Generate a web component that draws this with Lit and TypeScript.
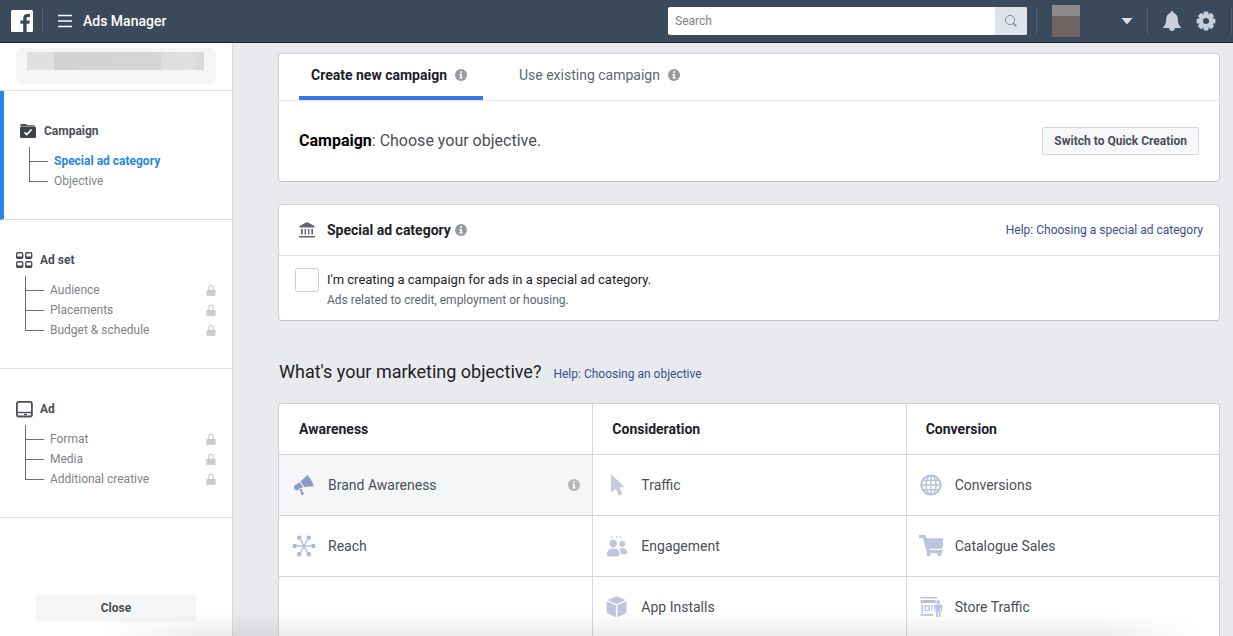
import { LitElement, html, svg, css, nothing, type TemplateResult } from "lit";
import { customElement, property } from "lit/decorators.js";
import { classMap } from "lit/directives/class-map.js";

interface Icon {
  width: number;
  height: number;
  body: TemplateResult;
}

const ICONS: Record<string, Icon> = {
  logo: {
    width: 22,
    height: 22,
    body: svg`<rect width="22" height="22" rx="1.5" fill="#fff"/>
      <path fill="#3a4a5b" d="M12.2 22v-8.2H9.4v-3.2h2.8V8.300C12.200 5.400 13.900 4 16.500 4c1.200 0 2.200.1 2.500.1v2.900h-1.700c-1.400 0-1.700.7-1.700 1.600v2h3.200l-.4 3.200h-2.800V22z"/>`,
  },
  menu: {
    width: 14,
    height: 14,
    body: svg`<path d="M0 1.500h14M0 7h14M0 12.500h14" stroke="#fff" stroke-width="1.500"/>`,
  },
  search: {
    width: 14,
    height: 14,
    body: svg`<circle cx="6" cy="6" r="4.600" fill="none" stroke="#858b93" stroke-width="1"/><path d="M9.300 9.300l3 3" stroke="#858b93" stroke-width="1.800"/>`,
  },
  caret: {
    width: 12,
    height: 8,
    body: svg`<path d="M.5 1h11L6 7.500z" fill="#dcdfe6"/>`,
  },
  bell: {
    width: 18,
    height: 20,
    body: svg`<g fill="#c9cfda"><path d="M9 0c.9 0 1.500.6 1.500 1.400v.5c2.800.7 4.300 3 4.300 6.100 0 4 1 6 3 8.200v.8H.2v-.8c2-2.200 3-4.200 3-8.200 0-3.100 1.500-5.400 4.300-6.100v-.5C7.500.6 8.100 0 9 0z"/><path d="M6 17h6c-.3 1.900-1.400 2.900-3 2.900S6.300 18.900 6 17z"/></g>`,
  },
  gear: {
    width: 20,
    height: 20,
    body: svg`<g fill="#c9cfda">${[0, 45, 90, 135].map(
      (a) => svg`<rect x="7.500" y="0.600" width="5" height="18.800" rx="1" transform="rotate(${a} 10 10)"/>`,
    )}<circle cx="10" cy="10" r="7.200"/></g><circle cx="10" cy="10" r="3" fill="#3a4a5b"/>`,
  },
  info: {
    width: 12,
    height: 12,
    body: svg`<circle cx="6" cy="6" r="6" fill="currentColor"/><circle cx="6" cy="3.100" r="1.100" fill="#fff"/><path d="M4.400 5h2.500v3.500h.9v1H4.300v-1h.9V6h-.8z" fill="#fff"/>`,
  },
  lock: {
    width: 10,
    height: 12,
    body: svg`<path d="M2.900 6.500V3.300a2.100 2.100 0 0 1 4.200 0v3.200" fill="none" stroke="#bfc0c3" stroke-width="1"/><path d="M.5 6h9v5.800h-9z" fill="#c6c7ca"/><path d="M.5 8h9M.5 10h9" stroke="#d8d9db" stroke-width=".7"/>`,
  },
  campaign: {
    width: 16,
    height: 14,
    body: svg`<path d="M1.500 0h4.300l1.400 1.300h6.600a1 1 0 0 1 1 1H1.200L.5 3V1c0-.6.4-1 1-1z" fill="#4b4f56"/><rect y="2.400" width="16" height="11.600" rx="1.500" fill="#3f4349"/><path d="M4.500 8.300l2.300 2.200 4.700-5" fill="none" stroke="#fff" stroke-width="1.700"/>`,
  },
  adset: {
    width: 17,
    height: 17,
    body: svg`${[[0.7, 0.7], [9.7, 0.7], [0.7, 9.7], [9.7, 9.7]].map(
      ([x, y]) =>
        svg`<rect x="${x}" y="${y}" width="6" height="5.600" rx="1.200" fill="none" stroke="#4b4f56" stroke-width="1.400"/><path d="M${x} ${y + 4.8}h6" stroke="#3f4349" stroke-width="2"/>`,
    )}`,
  },
  ad: {
    width: 17,
    height: 17,
    body: svg`<rect x=".9" y=".9" width="15" height="14.600" rx="2" fill="none" stroke="#4b4f56" stroke-width="1.800"/><path d="M1 11.500h15" stroke="#4b4f56" stroke-width="1.400"/><path d="M8 13.500h3" stroke="#4b4f56" stroke-width="1.400"/>`,
  },
  bank: {
    width: 16,
    height: 16,
    body: svg`<path fill="#606770" d="M8 0l7.500 4v1.400H.5V4zM2 7h1.700v5.500H2zM5.600 7H7v5.500H5.600zM9 7h1.400v5.500H9zM12.300 7H14v5.500h-1.700zM0 14h16v1.500H0z"/>`,
  },
  megaphone: {
    width: 24,
    height: 24,
    body: svg`<path fill="#8c9bc8" d="M15.600 2c1.900 2.100 5.600 8 6.300 11.200l-9.600.8-4-5.500zM7.400 9.200l3.900 5.200-3.300.7c-.9 1.700-2.600 2.600-4 2.200-1.900-.6-2.500-2.900-1.500-4.500.5-.8 1.400-1.400 2.400-1.500zM7.600 16.200l2.200-.5.700 3.200 1.200.9c.5.700 0 1.900-.9 2.300-.6.200-1.200.1-1.500-.4z"/>`,
  },
  reach: {
    width: 24,
    height: 24,
    body: svg`<path d="M2 12h20M7.400 3.500l9.200 17M16.600 3.500L7.400 20.500" stroke="#b4bbdc" stroke-width="1.500"/><g fill="#aeb7d8">${[
      [2.700, 12], [21.300, 12], [7.200, 3.800], [16.800, 3.800], [7.200, 20.200], [16.800, 20.200],
    ].map(([x, y]) => svg`<circle cx="${x}" cy="${y}" r="2.200"/>`)}</g>`,
  },
  pointer: {
    width: 24,
    height: 24,
    body: svg`<path fill="#c5c9e2" d="M6 1l13.300 13-4.800.6 2.900 6.300-3.500 1.600-2.900-6.500L6 19.500z"/>`,
  },
  people: {
    width: 24,
    height: 24,
    body: svg`<g fill="#c0c5e0"><circle cx="8.300" cy="9.500" r="3.700"/><path d="M2 20.500c0-4 2.200-6 6.300-6s6.300 2 6.300 6c0 1.600-1 2-2.300 2h-8c-1.300 0-2.300-.4-2.300-2z"/><circle cx="17.300" cy="10" r="3"/><path d="M14.300 14.900c1-.5 1.900-.7 3-.7 3.200 0 4.900 1.500 4.900 4.400 0 1.200-.7 1.700-1.800 1.700h-4.600c0-2.200-.4-4-1.500-5.400z"/><path d="M6.700 2l1 .8v1.200h-1zM10.800 2.200h1.600v1.600h-1.600zM16 2l-1 .8v1.200h1z"/></g>`,
  },
  cube: {
    width: 24,
    height: 24,
    body: svg`<g fill="#bfc4e0"><path d="M11.600 1.300L20.700 5l-9.100 4.200L2.500 5z"/><path d="M1.700 6.300l9.200 4.100v11.800L3 18.600a2 2 0 0 1-1.300-1.900z"/><path d="M21.500 6.300l-9.200 4.100v11.800l7.900-3.600a2 2 0 0 0 1.300-1.900z"/></g>`,
  },
  globe: {
    width: 24,
    height: 24,
    body: svg`<g fill="none" stroke="#bbc2de" stroke-width="1.400"><circle cx="12" cy="12" r="9.600" stroke-width="2"/><ellipse cx="12" cy="12" rx="5" ry="9.600"/><path d="M12 2v20M2 12h20M3.800 7.300h16.400M3.800 16.700h16.400"/></g>`,
  },
  cart: {
    width: 26,
    height: 24,
    body: svg`<g fill="#bcc3de"><path d="M1 1h6.300l1.100 3.200H25v9.300l-1.400 1.300H11.300l.5 1.200H24.500v2.200H8.900L4.900 4H1z"/><path d="M8.500 17h15.500v2.300H9.200z"/><circle cx="10.500" cy="20.300" r="1.900"/><circle cx="21.500" cy="20.300" r="1.900"/></g>`,
  },
  store: {
    width: 24,
    height: 24,
    body: svg`<g fill="#bcc1de"><path d="M1.500 2h17v1.500h-17zM1.500 4.900h15.300v3H1.500zM2.500 9.200h1.600v9.300H2.500zM1.500 19h12.500v1.800H1.500zM5.500 10.200h5.500v5.800H5.500zm1.300 1.300v3.200h2.900v-3.200zM12.300 10.200h2v1.200h-1.100v4.600h-.9z"/><circle cx="19.200" cy="7" r="1.900"/><path d="M16 9.600h6.300l1 1v6h-1.200v-4.300h-.6V22h-1.700v-5.500h-1V22h-1.700v-9.700h-.6v4.300h-1.200v-6z"/></g>`,
  },
};

const icon = (name: string) => {
  const i = ICONS[name];
  return html`<svg class="icon" width=${i.width} height=${i.height} viewBox="0 0 ${i.width} ${i.height}" aria-hidden="true">${i.body}</svg>`;
};

const shared = css`
  * {
    box-sizing: border-box;
  }
  h1, h2, h3, p, ul {
    margin: 0;
    padding: 0;
    font-weight: inherit;
    font-size: inherit;
  }
  ul {
    list-style: none;
  }
  a {
    color: inherit;
    text-decoration: none;
  }
  button, input {
    font: inherit;
    color: inherit;
    margin: 0;
    padding: 0;
    border: 0;
    background: none;
    border-radius: 0;
  }
  button {
    cursor: pointer;
  }
  .icon {
    display: block;
    flex: none;
  }
`;

@customElement("top-bar")
export class TopBar extends LitElement {
  static styles = [
    shared,
    css`
      :host {
        display: flex;
        align-items: center;
        height: 43px;
        background: #3a4a5b;
        border-bottom: 1px solid #1b2330;
        color: #fff;
      }
      .logo {
        padding: 0 9px 0 11px;
      }
      .divider {
        width: 1px;
        height: 26px;
        background: #52606f;
      }
      .menu {
        display: flex;
        align-items: center;
        gap: 11px;
        padding-left: 15px;
        font-size: 14px;
        line-height: 20px;
        font-weight: 500;
      }
      .search {
        display: flex;
        width: 359px;
        height: 28px;
        margin: 0 9px 0 auto;
        border-radius: 2px;
        overflow: hidden;
        background: #fff;
      }
      .search input {
        flex: 1;
        min-width: 0;
        padding: 0 7px;
        font-size: 12px;
        color: #1d2129;
        outline: none;
      }
      .search input::placeholder {
        color: #7f7f7f;
        opacity: 1;
      }
      .search button {
        display: grid;
        place-items: center;
        width: 32px;
        background: #dfe3e8;
      }
      .profile {
        display: flex;
        align-items: center;
        gap: 41px;
        padding: 0 14px 0 15px;
      }
      .avatar {
        width: 28px;
        height: 32px;
        background: linear-gradient(#8b8b8b 11px, #6f6463 11px);
      }
      .tools {
        display: flex;
        align-items: center;
        gap: 15px;
        padding: 0 15px;
      }
      .end {
        margin-right: 1px;
      }
    `,
  ];

  render() {
    return html`
      <a class="logo" href="#" aria-label="Facebook">${icon("logo")}</a>
      <span class="divider"></span>
      <button class="menu">${icon("menu")}<span>Ads Manager</span></button>
      <form class="search" role="search" @submit=${(e: Event) => e.preventDefault()}>
        <input type="text" placeholder="Search" aria-label="Search" />
        <button type="submit" aria-label="Submit search">${icon("search")}</button>
      </form>
      <span class="divider"></span>
      <button class="profile" aria-label="Account"><span class="avatar"></span>${icon("caret")}</button>
      <span class="divider"></span>
      <div class="tools">
        <button aria-label="Notifications">${icon("bell")}</button>
        <button aria-label="Settings">${icon("gear")}</button>
      </div>
      <span class="divider end"></span>
    `;
  }
}

interface Step {
  title: string;
  icon: string;
  active?: boolean;
  locked?: boolean;
  items: string[];
}

const STEPS: Step[] = [
  { title: "Campaign", icon: "campaign", active: true, items: ["Special ad category", "Objective"] },
  { title: "Ad set", icon: "adset", locked: true, items: ["Audience", "Placements", "Budget & schedule"] },
  { title: "Ad", icon: "ad", locked: true, items: ["Format", "Media", "Additional creative"] },
];

@customElement("step-nav")
export class StepNav extends LitElement {
  static styles = [
    shared,
    css`
      :host {
        display: flex;
        flex-direction: column;
        background: #fff;
        border-right: 1px solid #d8dade;
        font-size: 12px;
        line-height: 20px;
        color: #7f8288;
      }
      .account {
        padding: 5px 16px 6px;
        border-bottom: 1px solid #dadde1;
      }
      .account-box {
        display: block;
        width: 100%;
        height: 36px;
        padding: 4px 12px 14px 11px;
        border-radius: 6px;
        background: #f5f5f6;
      }
      .account-name {
        display: block;
        height: 18px;
        background: linear-gradient(90deg, #e0e0e0 27px, #d2d2d2 27px, #d5d5d5 134px, #dedede 134px, #e0e0e2 162px, #d8d8d8);
      }
      .step {
        padding: 30px 16px 28px;
        border-bottom: 1px solid #dadde1;
      }
      .step.active {
        border-left: 4px solid #2787e4;
      }
      .title {
        display: flex;
        align-items: center;
        gap: 7px;
        font-weight: 700;
        color: #4b4f56;
      }
      .active .title {
        gap: 8px;
      }
      .items {
        margin: 6px 0 0 9px;
        padding-top: 4px;
        background: linear-gradient(#6c7076, #6c7076) 0 0 / 1px 4px no-repeat;
      }
      .item {
        display: flex;
        align-items: center;
        gap: 6px;
        height: 20px;
      }
      .branch {
        align-self: stretch;
        width: 19px;
        background:
          linear-gradient(#6c7076, #6c7076) 0 0 / 1px 100% no-repeat,
          linear-gradient(#6c7076, #6c7076) 0 10px / 100% 1px no-repeat;
      }
      .item:last-child .branch {
        background-size: 1px 10px, 100% 1px;
      }
      .item .icon {
        margin-left: auto;
      }
      .current {
        font-weight: 700;
        color: #2787e4;
      }
      .footer {
        margin-top: auto;
        padding: 14px 36px;
      }
      .close {
        display: block;
        width: 100%;
        height: 28px;
        border-radius: 3px;
        background: #f5f6f7;
        font-weight: 700;
        color: #4b4f56;
      }
    `,
  ];

  render() {
    return html`
      <div class="account">
        <button class="account-box" aria-label="Ad account"><span class="account-name"></span></button>
      </div>
      ${STEPS.map(
        (s) => html`
          <section class=${classMap({ step: true, active: !!s.active })}>
            <h2 class="title">${icon(s.icon)}<span>${s.title}</span></h2>
            <ul class="items">
              ${s.items.map(
                (t, i) => html`<li class="item">
                  <span class="branch"></span>
                  <a href="#" class=${classMap({ current: !!s.active && i === 0 })}>${t}</a>
                  ${s.locked ? icon("lock") : nothing}
                </li>`,
              )}
            </ul>
          </section>
        `,
      )}
      <div class="footer"><button class="close">Close</button></div>
    `;
  }
}

interface Objective {
  name: string;
  icon: string;
}

@customElement("objective-column")
export class ObjectiveColumn extends LitElement {
  @property() heading = "";
  @property({ attribute: false }) objectives: Objective[] = [];
  @property() hovered = "";

  static styles = [
    shared,
    css`
      :host {
        display: block;
        min-width: 0;
        box-shadow: 1px 0 #d3d6db;
      }
      .heading {
        height: 51px;
        padding: 0 20px;
        border-bottom: 1px solid #d3d6db;
        font-size: 14px;
        line-height: 50px;
        font-weight: 700;
        color: #1d2129;
      }
      .objective {
        display: flex;
        align-items: center;
        width: 100%;
        height: 61px;
        padding: 0 12px 0 11px;
        border-bottom: 1px solid #d3d6db;
        font-size: 14px;
        line-height: 20px;
        color: #4b4f56;
      }
      .hovered {
        background: #f5f6f8;
      }
      .glyph {
        display: grid;
        place-items: center;
        width: 28px;
        margin-right: 10px;
      }
      .hint {
        margin-left: auto;
        color: #b4b6ba;
      }
    `,
  ];

  render() {
    return html`
      <h3 class="heading">${this.heading}</h3>
      <ul>
        ${this.objectives.map((o) => {
          const on = o.name === this.hovered;
          return html`<li>
            <button class=${classMap({ objective: true, hovered: on })}>
              <span class="glyph">${icon(o.icon)}</span>
              <span>${o.name}</span>
              ${on ? html`<span class="hint">${icon("info")}</span>` : nothing}
            </button>
          </li>`;
        })}
      </ul>
    `;
  }
}

const COLUMNS: { heading: string; objectives: Objective[] }[] = [
  {
    heading: "Awareness",
    objectives: [
      { name: "Brand Awareness", icon: "megaphone" },
      { name: "Reach", icon: "reach" },
    ],
  },
  {
    heading: "Consideration",
    objectives: [
      { name: "Traffic", icon: "pointer" },
      { name: "Engagement", icon: "people" },
      { name: "App Installs", icon: "cube" },
    ],
  },
  {
    heading: "Conversion",
    objectives: [
      { name: "Conversions", icon: "globe" },
      { name: "Catalogue Sales", icon: "cart" },
      { name: "Store Traffic", icon: "store" },
    ],
  },
];

@customElement("app-root")
export class AppRoot extends LitElement {
  static styles = [
    shared,
    css`
      :host {
        display: grid;
        grid-template: auto minmax(0, 1fr) / 233px minmax(0, 1fr);
        height: 100vh;
        overflow: hidden;
        position: relative;
        background: #e9eaed;
        font-family: Roboto, "Liberation Sans", sans-serif;
        color: #1d2129;
      }
      :host::after {
        content: "";
        position: absolute;
        inset: auto 30px 0 100px;
        height: 24px;
        pointer-events: none;
        background: linear-gradient(transparent, rgba(0, 0, 0, 0.07));
        mask-image: linear-gradient(90deg, transparent, #000 100px, #000 calc(100% - 100px), transparent);
      }
      top-bar {
        grid-column: 1 / -1;
      }
      .main {
        overflow: hidden;
        padding: 10px 13px 0 45px;
      }
      .card {
        background: #fff;
        border: 1px solid #cfd1d5;
        border-bottom-color: #bfc2c7;
        border-radius: 4px;
      }
      .info {
        color: #96999e;
      }
      .tabs {
        display: flex;
        gap: 24px;
        padding: 0 20px;
        border-bottom: 1px solid #e5e6e9;
      }
      .tab {
        display: flex;
        align-items: center;
        gap: 8px;
        height: 46px;
        padding: 0 16px 0 12px;
        border-bottom: 4px solid transparent;
        font-size: 14px;
        line-height: 20px;
        color: #606770;
      }
      .tab.selected {
        border-color: #3578e5;
        font-weight: 700;
        color: #1d2129;
      }
      .intro {
        display: flex;
        align-items: center;
        justify-content: space-between;
        height: 80px;
        padding: 0 20px;
        font-size: 16px;
        line-height: 20px;
        color: #4b4f56;
      }
      .intro b {
        color: #000;
      }
      .switch {
        height: 28px;
        padding: 0 11px;
        border: 1px solid #d3d6db;
        border-radius: 2px;
        background: #f6f7f9;
        font-size: 12px;
        font-weight: 700;
        color: #4b4f56;
      }
      .special {
        margin-top: 22px;
      }
      .special-head {
        display: flex;
        align-items: center;
        height: 51px;
        padding: 0 16px 0 20px;
        border-bottom: 1px solid #dadde1;
      }
      .special-title {
        margin: 0 4px 0 12px;
        font-size: 14px;
        line-height: 20px;
        font-weight: 700;
      }
      .link {
        font-size: 12px;
        line-height: 20px;
        color: #365097;
      }
      .special-head .link {
        margin-left: auto;
      }
      .choice {
        display: flex;
        gap: 8px;
        padding: 12px 16px 10px;
        font-size: 12px;
        line-height: 20px;
        color: #606770;
      }
      .choice input {
        appearance: none;
        width: 24px;
        height: 24px;
        border: 1px solid #ccd0d5;
        border-radius: 3px;
        background: #fff;
      }
      .choice label {
        display: block;
        padding-top: 2px;
        font-size: 13px;
        color: #1d2129;
      }
      .question {
        display: flex;
        align-items: baseline;
        gap: 12px;
        margin: 38px 0 19px;
        padding-left: 1px;
      }
      .question h2 {
        font-size: 18px;
        line-height: 25px;
      }
      .columns {
        display: grid;
        grid-template-columns: repeat(3, minmax(0, 1fr));
        overflow: hidden;
        min-height: 300px;
      }
    `,
  ];

  render() {
    return html`
      <top-bar role="banner"></top-bar>
      <step-nav role="navigation"></step-nav>
      <main class="main">
        <section class="card">
          <div class="tabs" role="tablist">
            <button class="tab selected" role="tab" aria-selected="true">
              Create new campaign<span class="info">${icon("info")}</span>
            </button>
            <button class="tab" role="tab" aria-selected="false">
              Use existing campaign<span class="info">${icon("info")}</span>
            </button>
          </div>
          <div class="intro">
            <p><b>Campaign</b>: Choose your objective.</p>
            <button class="switch">Switch to Quick Creation</button>
          </div>
        </section>

        <section class="card special">
          <div class="special-head">
            ${icon("bank")}
            <h2 class="special-title">Special ad category</h2>
            <span class="info">${icon("info")}</span>
            <a class="link" href="#">Help: Choosing a special ad category</a>
          </div>
          <div class="choice">
            <input id="special" type="checkbox" aria-describedby="special-note" />
            <div>
              <label for="special">I'm creating a campaign for ads in a special ad category.</label>
              <p id="special-note">Ads related to credit, employment or housing.</p>
            </div>
          </div>
        </section>

        <div class="question">
          <h2>What's your marketing objective?</h2>
          <a class="link" href="#">Help: Choosing an objective</a>
        </div>

        <section class="card columns">
          ${COLUMNS.map(
            (c) => html`<objective-column
              .heading=${c.heading}
              .objectives=${c.objectives}
              .hovered=${"Brand Awareness"}
            ></objective-column>`,
          )}
        </section>
      </main>
    `;
  }
}
